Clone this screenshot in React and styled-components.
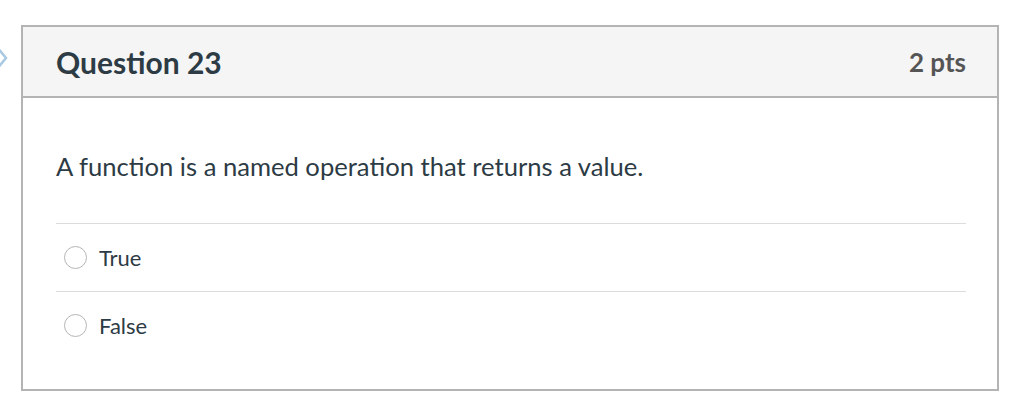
import styled, { createGlobalStyle } from "styled-components";

const Global = createGlobalStyle`
  body {
    margin: 0;
    background: #fff;
    font-family: Lato, "Open Sans", sans-serif;
  }
`;

export default function App() {
  return (
    <Page>
      <Global />
      <Flag>
        <svg width="10" height="26" viewBox="0 0 10 26">
          <path d="M-3 2 L6 13 L-3 24" fill="none" stroke="#a9c9e3" strokeWidth="2.5" />
        </svg>
      </Flag>
      <Card>
        <Header>
          <Title>Question 23</Title>
          <Points>2 pts</Points>
        </Header>
        <Body>
          <Prompt>A function is a named operation that returns a value.</Prompt>
          <Answers>
            <Answer>
              <Radio />
              <Label>True</Label>
            </Answer>
            <Answer>
              <Radio />
              <Label>False</Label>
            </Answer>
          </Answers>
        </Body>
      </Card>
    </Page>
  );
}

const Page = styled.div`
  position: relative;
  width: 1024px;
  height: 407px;
  padding: 25px 0 0 21px;
  box-sizing: border-box;
`;

const Flag = styled.div`
  position: absolute;
  left: 0;
  top: 45px;
`;

const Card = styled.div`
  width: 978px;
  height: 366px;
  box-sizing: border-box;
  border: 2px solid #b4b4b4;
  background: #fff;
  display: flex;
  flex-direction: column;
`;

const Header = styled.div`
  height: 71px;
  box-sizing: border-box;
  background: #f5f5f5;
  border-bottom: 2px solid #b4b4b4;
  display: flex;
  align-items: center;
  justify-content: space-between;
  padding: 0 31px 0 33px;
`;

const Title = styled.div`
  font-size: 30px;
  font-weight: 700;
  color: #2d3b45;
`;

const Points = styled.div`
  font-size: 26px;
  font-weight: 700;
  color: #555;
`;

const Body = styled.div`
  padding: 52px 31px 0 33px;
`;

const Prompt = styled.div`
  font-size: 25.6px;
  color: #2d3b45;
  line-height: 32px;
  padding-bottom: 41px;
  border-bottom: 1px solid #dcdcdc;
`;

const Answers = styled.div`
  display: flex;
  flex-direction: column;
`;

const Answer = styled.div`
  height: 67px;
  display: flex;
  align-items: center;
  gap: 12px;
  padding-left: 8px;
  border-bottom: 1px solid #dcdcdc;

  &:last-child {
    border-bottom: none;
  }
`;

const Radio = styled.span`
  width: 23px;
  height: 23px;
  border-radius: 50%;
  border: 1px solid #b5b5b5;
  box-sizing: border-box;
  background: #fff;
`;

const Label = styled.span`
  font-size: 22px;
  color: #2d3b45;
`;
